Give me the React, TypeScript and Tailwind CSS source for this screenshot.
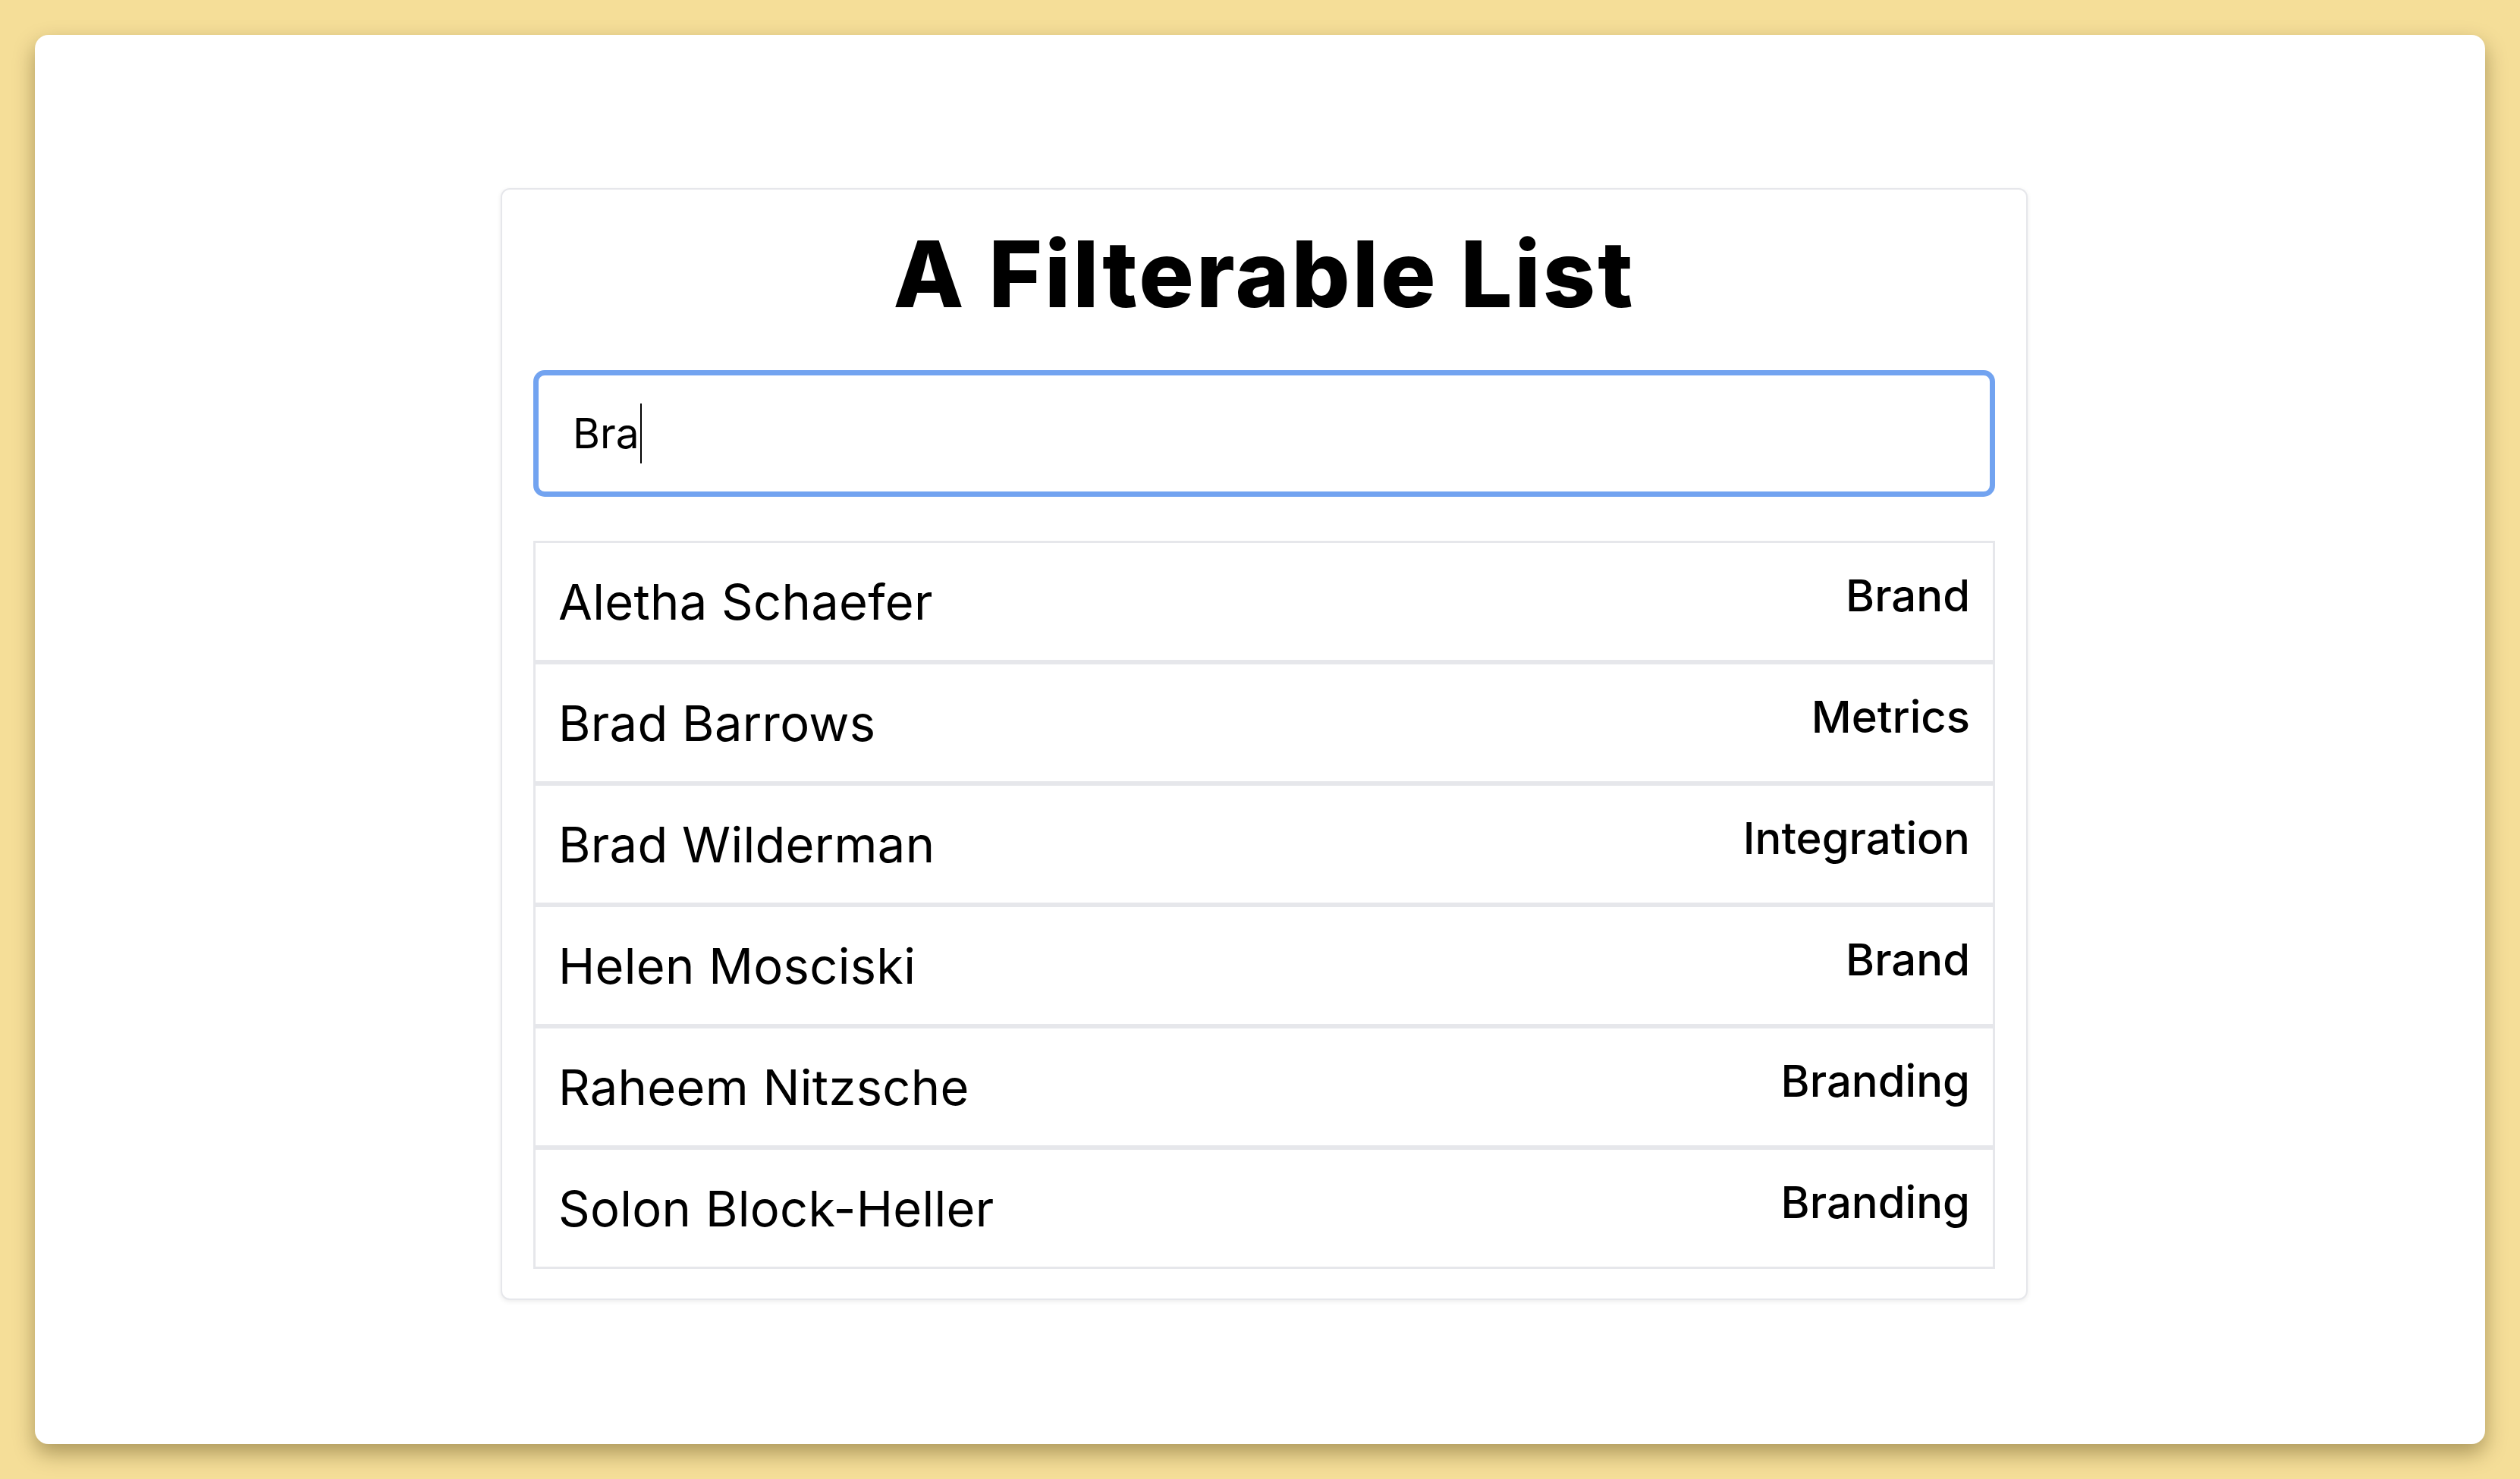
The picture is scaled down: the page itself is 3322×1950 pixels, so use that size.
import React, { useState } from 'react';

type Person = {
  name: string;
  category: string;
};

const people: Person[] = [
  { name: 'Aletha Schaefer', category: 'Brand' },
  { name: 'Brad Barrows', category: 'Metrics' },
  { name: 'Brad Wilderman', category: 'Integration' },
  { name: 'Helen Mosciski', category: 'Brand' },
  { name: 'Raheem Nitzsche', category: 'Branding' },
  { name: 'Solon Block-Heller', category: 'Branding' },
];

const App: React.FC = () => {
  const [query] = useState('Bra');

  return (
    <div className="h-screen w-full bg-[#f5de98] p-[46px] font-['Inter','Noto_Sans',sans-serif] text-black">
      <div className="h-full w-full rounded-[18px] bg-white pt-[202px] shadow-[0_12px_28px_rgba(60,45,0,0.4)]">
        <div className="ml-[614px] w-[2013px] rounded-[12px] border-2 border-[#e6e7eb] bg-white px-[41px] pt-[51px] pb-[39px] shadow-[0_2px_6px_rgba(0,0,0,0.08)]">
          <h1 className="text-center text-[121px] leading-none font-extrabold tracking-[3px]">A Filterable List</h1>

          {/* search box, drawn with its caret */}
          <div className="mt-[66px] flex h-[167px] items-center rounded-[15px] border-[7px] border-[#72a3f0] pl-[45px]">
            <span className="text-[55px] leading-none">{query}</span>
            <span className="ml-[1px] h-[79px] w-[2px] bg-black" />
          </div>

          <ul className="mt-[58px]">
            {people.map((p) => (
              <li
                key={p.name}
                className="flex h-[160px] items-center justify-between border-[3px] border-[#e6e7eb] px-[30px]"
              >
                <span className="text-[65px] leading-none tracking-[0.3px]">{p.name}</span>
                <span className="mb-[16px] text-[58px] leading-none font-medium">{p.category}</span>
              </li>
            ))}
          </ul>
        </div>
      </div>
    </div>
  );
};

export default App;
